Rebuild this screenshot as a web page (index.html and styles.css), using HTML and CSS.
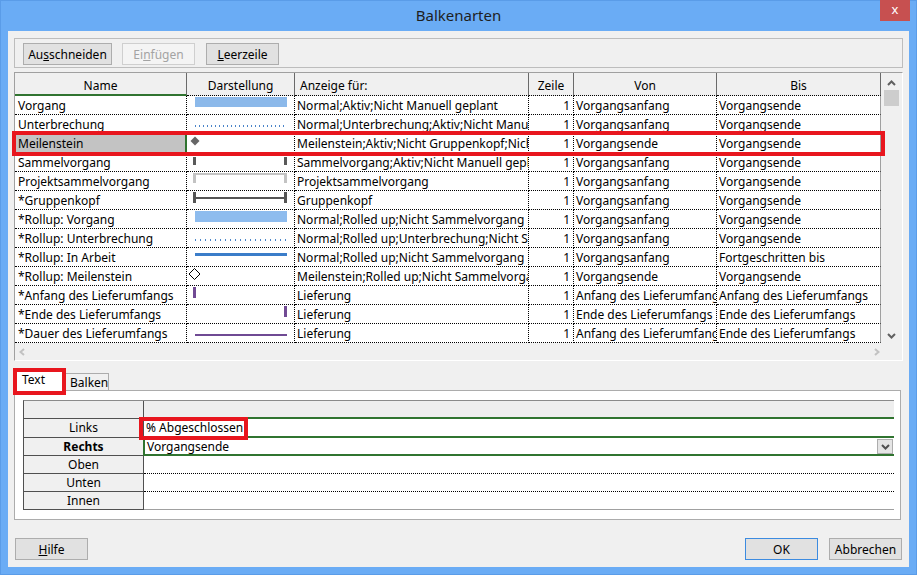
FILE: index.html
```html
<!DOCTYPE html>
<html lang="de">
<head>
<meta charset="utf-8">
<title>Balkenarten</title>
<link rel="stylesheet" href="styles.css">
</head>
<body>
<div class="window">
  <div class="titlebar">
    <div></div>
    <div class="title">Balkenarten</div>
    <div class="close">x</div>
  </div>
  <div class="client">
    <div class="toolbar">
      <button class="btn btn-cut">Au<u>s</u>schneiden</button>
      <button class="btn btn-paste" disabled>Ei<u>n</u>fügen</button>
      <button class="btn btn-blank"><u>L</u>eerzeile</button>
    </div>

    <div class="table">
      <div class="table-main">
        <div class="cols">
          <div class="row head">
            <div class="c c-name">Name</div>
            <div class="c c-dar">Darstellung</div>
            <div class="c c-anz">Anzeige für:</div>
            <div class="c c-zei">Zeile</div>
            <div class="c c-von">Von</div>
            <div class="c c-bis">Bis</div>
          </div>
          <div class="row">
            <div class="c c-name">Vorgang</div>
            <div class="c c-dar"><svg width="107" height="18"><rect x="8" y="1" width="92" height="10" fill="#8cb9ea"/></svg></div>
            <div class="c c-anz">Normal;Aktiv;Nicht Manuell geplant</div>
            <div class="c c-zei">1</div>
            <div class="c c-von">Vorgangsanfang</div>
            <div class="c c-bis">Vorgangsende</div>
          </div>
          <div class="row">
            <div class="c c-name">Unterbrechung</div>
            <div class="c c-dar"><svg width="107" height="18"><line x1="8" y1="11" x2="100" y2="11" stroke="#4a84c8" stroke-width="2" stroke-dasharray="1 3"/></svg></div>
            <div class="c c-anz">Normal;Unterbrechung;Aktiv;Nicht Manuell geplant</div>
            <div class="c c-zei">1</div>
            <div class="c c-von">Vorgangsanfang</div>
            <div class="c c-bis">Vorgangsende</div>
          </div>
          <div class="row sel">
            <div class="c c-name selcell">Meilenstein</div>
            <div class="c c-dar"><svg width="107" height="18"><polygon points="8,2.5 12.5,7 8,11.5 3.5,7" fill="#666666"/></svg></div>
            <div class="c c-anz">Meilenstein;Aktiv;Nicht Gruppenkopf;Nicht Manuell geplant</div>
            <div class="c c-zei">1</div>
            <div class="c c-von">Vorgangsende</div>
            <div class="c c-bis">Vorgangsende</div>
            <span class="mark mark-row"></span>
          </div>
          <div class="row">
            <div class="c c-name">Sammelvorgang</div>
            <div class="c c-dar"><svg width="107" height="18"><rect x="6" y="4" width="3" height="8" fill="#595959"/><rect x="97" y="4" width="3" height="8" fill="#595959"/></svg></div>
            <div class="c c-anz">Sammelvorgang;Aktiv;Nicht Manuell geplant</div>
            <div class="c c-zei">1</div>
            <div class="c c-von">Vorgangsanfang</div>
            <div class="c c-bis">Vorgangsende</div>
          </div>
          <div class="row">
            <div class="c c-name">Projektsammelvorgang</div>
            <div class="c c-dar"><svg width="107" height="18"><path d="M6 1H100V11H97V3H9V11H6Z" fill="#c3c3c3"/></svg></div>
            <div class="c c-anz">Projektsammelvorgang</div>
            <div class="c c-zei">1</div>
            <div class="c c-von">Vorgangsanfang</div>
            <div class="c c-bis">Vorgangsende</div>
          </div>
          <div class="row">
            <div class="c c-name">*Gruppenkopf</div>
            <div class="c c-dar"><svg width="107" height="18"><g fill="#555555"><rect x="6" y="1" width="3" height="11"/><rect x="97" y="1" width="3" height="11"/><rect x="6" y="6" width="94" height="2"/></g></svg></div>
            <div class="c c-anz">Gruppenkopf</div>
            <div class="c c-zei">1</div>
            <div class="c c-von">Vorgangsanfang</div>
            <div class="c c-bis">Vorgangsende</div>
          </div>
          <div class="row">
            <div class="c c-name">*Rollup: Vorgang</div>
            <div class="c c-dar"><svg width="107" height="18"><rect x="8" y="1" width="92" height="11" fill="#8ebcee"/></svg></div>
            <div class="c c-anz">Normal;Rolled up;Nicht Sammelvorgang</div>
            <div class="c c-zei">1</div>
            <div class="c c-von">Vorgangsanfang</div>
            <div class="c c-bis">Vorgangsende</div>
          </div>
          <div class="row">
            <div class="c c-name">*Rollup: Unterbrechung</div>
            <div class="c c-dar"><svg width="107" height="18"><line x1="8" y1="11" x2="100" y2="11" stroke="#4a86c9" stroke-width="2" stroke-dasharray="1 4"/></svg></div>
            <div class="c c-anz">Normal;Rolled up;Unterbrechung;Nicht Sammelvorgang</div>
            <div class="c c-zei">1</div>
            <div class="c c-von">Vorgangsanfang</div>
            <div class="c c-bis">Vorgangsende</div>
          </div>
          <div class="row">
            <div class="c c-name">*Rollup: In Arbeit</div>
            <div class="c c-dar"><svg width="107" height="18"><rect x="8" y="5" width="92" height="3" fill="#3b7dc9"/></svg></div>
            <div class="c c-anz">Normal;Rolled up;Nicht Sammelvorgang</div>
            <div class="c c-zei">1</div>
            <div class="c c-von">Vorgangsanfang</div>
            <div class="c c-bis">Fortgeschritten bis</div>
          </div>
          <div class="row">
            <div class="c c-name">*Rollup: Meilenstein</div>
            <div class="c c-dar"><svg width="107" height="18"><polygon points="7.5,1.5 13,7 7.5,12.5 2,7" fill="#ffffff" stroke="#000000" stroke-width="1"/></svg></div>
            <div class="c c-anz">Meilenstein;Rolled up;Nicht Sammelvorgang</div>
            <div class="c c-zei">1</div>
            <div class="c c-von">Vorgangsende</div>
            <div class="c c-bis">Vorgangsende</div>
          </div>
          <div class="row">
            <div class="c c-name">*Anfang des Lieferumfangs</div>
            <div class="c c-dar"><svg width="107" height="18"><rect x="6" y="1" width="3" height="11" fill="#714a94"/></svg></div>
            <div class="c c-anz">Lieferung</div>
            <div class="c c-zei">1</div>
            <div class="c c-von">Anfang des Lieferumfangs</div>
            <div class="c c-bis">Anfang des Lieferumfangs</div>
          </div>
          <div class="row">
            <div class="c c-name">*Ende des Lieferumfangs</div>
            <div class="c c-dar"><svg width="107" height="18"><rect x="97" y="1" width="3" height="11" fill="#714a94"/></svg></div>
            <div class="c c-anz">Lieferung</div>
            <div class="c c-zei">1</div>
            <div class="c c-von">Ende des Lieferumfangs</div>
            <div class="c c-bis">Ende des Lieferumfangs</div>
          </div>
          <div class="row">
            <div class="c c-name">*Dauer des Lieferumfangs</div>
            <div class="c c-dar"><svg width="107" height="18"><rect x="8" y="10" width="92" height="2" fill="#6f4a93"/></svg></div>
            <div class="c c-anz">Lieferung</div>
            <div class="c c-zei">1</div>
            <div class="c c-von">Anfang des Lieferumfangs</div>
            <div class="c c-bis">Ende des Lieferumfangs</div>
          </div>
        </div>
        <div class="vscroll">
          <svg class="arrow-up" width="9" height="6"><path d="M1 5L4.5 1.5L8 5" fill="none" stroke="#606060" stroke-width="2"/></svg>
          <div class="thumb"></div>
          <div class="track"></div>
          <svg class="arrow-down" width="9" height="6"><path d="M1 1L4.5 4.5L8 1" fill="none" stroke="#606060" stroke-width="2"/></svg>
        </div>
      </div>
      <div class="hscroll">
        <div class="hbar">
          <svg width="6" height="8"><path d="M5 1L1.5 4L5 7" fill="none" stroke="#c2c2c2" stroke-width="2"/></svg>
          <svg width="6" height="8"><path d="M1 1L4.5 4L1 7" fill="none" stroke="#c2c2c2" stroke-width="2"/></svg>
        </div>
        <div class="corner"></div>
      </div>
    </div>

    <div class="tabs">
      <div class="tab tab-active">Text<span class="mark mark-tab"></span></div>
      <div class="tab tab-other">Balken</div>
    </div>
    <div class="panel">
      <div class="grid">
        <div class="rh rh-head"></div>
        <div class="vc vc-head"></div>
        <div class="rh">Links</div>
        <div class="vc vc-links">% Abgeschlossen<span class="mark mark-cell"></span></div>
        <div class="rh rh-bold">Rechts</div>
        <div class="vc vc-rechts">
          <span>Vorgangsende</span>
          <span class="dd"><svg width="9" height="6"><path d="M1 1L4.5 4.5L8 1" fill="none" stroke="#505050" stroke-width="2"/></svg></span>
        </div>
        <div class="rh">Oben</div>
        <div class="vc vc-dot"></div>
        <div class="rh">Unten</div>
        <div class="vc vc-dot"></div>
        <div class="rh rh-last">Innen</div>
        <div class="vc vc-last"></div>
      </div>
    </div>

    <div class="footer">
      <button class="btn btn-foot"><u>H</u>ilfe</button>
      <div class="spacer"></div>
      <button class="btn btn-foot btn-default">OK</button>
      <button class="btn btn-foot btn-cancel">Abbrechen</button>
    </div>
  </div>
</div>
</body>
</html>
```

FILE: styles.css
```css
* { box-sizing: border-box; }
html, body { margin: 0; padding: 0; }
body {
  width: 917px;
  height: 575px;
  overflow: hidden;
  font-family: "Noto Sans", sans-serif;
  font-size: 12px;
  color: #000;
}

.window {
  width: 917px;
  height: 575px;
  background: #6aacf5;
  border: 1px solid #5a9ce8;
  display: flex;
  flex-direction: column;
}

.titlebar {
  height: 30px;
  display: grid;
  grid-template-columns: 1fr auto 1fr;
}
.title {
  font-size: 15px;
  line-height: 29px;
  color: #1e1e1e;
}
.close {
  justify-self: end;
  align-self: start;
  margin-top: -1px;
  margin-right: 6px;
  width: 30px;
  height: 21px;
  background: #c75050;
  color: #fff;
  font-size: 13px;
  line-height: 19px;
  text-align: center;
}

.client {
  flex: 1;
  margin: 0 7px 7px 7px;
  background: #f0f0f0;
  padding: 7px 6px 0 6px;
  display: flex;
  flex-direction: column;
}

/* toolbar */
.toolbar {
  height: 30px;
  border: 1px solid #bdbdbd;
  padding: 4px 0 0 8px;
  display: flex;
  align-items: flex-start;
}
.btn {
  height: 22px;
  padding: 0;
  margin: 0;
  border: 1px solid #adadad;
  background: #e1e1e1;
  font-family: "Noto Sans", sans-serif;
  font-size: 12px;
  line-height: 19px;
  color: #000;
  text-align: center;
}
.btn-cut { width: 89px; }
.btn-paste {
  width: 73px;
  margin-left: 10px;
  color: #a3a3a3;
  background: #f4f4f4;
  border-color: #cfcfcf;
}
.btn-blank { width: 73px; margin-left: 11px; }

/* table */
.table {
  margin-top: 4px;
  height: 289px;
  border: 1px solid;
  border-color: #a0a0a0 #ffffff #ffffff #a0a0a0;
  display: flex;
  flex-direction: column;
}
.table-main {
  height: 270px;
  display: flex;
}
.cols {
  width: 866px;
  background: #fff;
  display: flex;
  flex-direction: column;
}
.row {
  height: 19px;
  display: flex;
}
.row.head { height: 23px; }
.sel { position: relative; }

.c {
  height: 100%;
  border-right: 1px dotted #000;
  border-bottom: 1px dotted #000;
  overflow: hidden;
  white-space: nowrap;
  line-height: 17px;
  padding: 1px 2px 0 2px;
}
.c-name { width: 172px; padding-left: 3px; }
.c-dar { width: 108px; padding: 0; }
.c-dar svg { display: block; }
.c-anz { width: 234px; }
.c-zei { width: 45px; text-align: right; padding-right: 3px; }
.c-von { width: 143px; }
.c-bis { width: 164px; border-right: 1px solid #a0a0a0; }

.head .c {
  background: #f0f0f0;
  border-right: 1px solid #6a6a6a;
  text-align: center;
  line-height: 18px;
  padding: 4px 0 0 0;
}
.head .c-name { border-bottom: 2px solid #307430; }
.head .c-anz { text-align: left; padding-left: 5px; }

.selcell {
  background: #c3c3c3;
  border-right: 2px solid #307430;
}

.vscroll {
  width: 21px;
  background: #f0f0f0;
  display: flex;
  flex-direction: column;
  align-items: center;
  padding-top: 7px;
}
.arrow-up, .arrow-down { display: block; flex: none; }
.thumb {
  width: 15px;
  height: 16px;
  margin-top: 4px;
  background: #cdcdcd;
}
.track { flex: 1; }
.arrow-down { margin-bottom: 4px; }

.hscroll {
  height: 17px;
  background: #f0f0f0;
  display: flex;
}
.hbar {
  width: 866px;
  display: flex;
  align-items: center;
  justify-content: space-between;
  padding: 0 1px 0 4px;
}
.hbar svg { display: block; }
.corner { width: 21px; }

/* annotation marks */
.mark {
  position: absolute;
  border: 4px solid #e8161e;
  pointer-events: none;
}
.mark-row { left: -3px; top: -3px; right: -4px; bottom: -3px; }
.mark-tab { left: -2px; top: -1px; right: -2px; bottom: -4px; }
.mark-cell { left: -5px; top: -2px; width: 109px; height: 23px; }

/* tabs */
.tabs {
  margin-top: 7px;
  height: 23px;
  margin-bottom: -1px;
  display: flex;
  align-items: flex-end;
}
.tab {
  border: 1px solid #acacac;
  border-bottom: none;
  font-size: 12px;
  white-space: nowrap;
}
.tab-active {
  position: relative;
  width: 51px;
  height: 23px;
  background: #fff;
  padding: 2px 0 0 7px;
  line-height: 18px;
}
.tab-other {
  width: 44px;
  height: 18px;
  background: #f0f0f0;
  border-left: none;
  padding-left: 5px;
  line-height: 17px;
}

/* panel */
.panel {
  height: 130px;
  width: 887px;
  border: 1px solid #acacac;
  background: #fff;
  padding: 9px 0 0 8px;
}
.grid {
  width: 871px;
  border-left: 1px solid #505050;
  border-top: 1px solid #8a8a8a;
  display: grid;
  grid-template-columns: 120px 1fr;
  grid-template-rows: 18px 19px 18px 18px 18px 18px;
}
.rh {
  background: #f0f0f0;
  border-right: 1px solid #505050;
  border-bottom: 1px solid #505050;
  text-align: center;
  line-height: 17px;
}
.rh-head { background: #eeeeee; }
.rh-bold { font-weight: bold; }
.vc {
  padding-left: 2px;
  line-height: 17px;
  white-space: nowrap;
}
.vc-head {
  background: #eeeeee;
  border-bottom: 2px solid #307430;
}
.vc-links {
  position: relative;
  border-bottom: 2px solid #307430;
}
.vc-rechts {
  border-left: 2px solid #307430;
  margin-left: -1px;
  border-bottom: 2px solid #307430;
  display: flex;
  align-items: flex-start;
  padding-left: 2px;
  padding-right: 1px;
}
.vc-rechts .dd {
  margin-left: auto;
  margin-top: 1px;
  width: 16px;
  height: 15px;
  border: 1px solid #adadad;
  background: #e5e5e5;
  display: flex;
  align-items: center;
  justify-content: center;
}
.vc-rechts .dd svg { display: block; }
.vc-dot { border-bottom: 1px dotted #000; }
.vc-last { border-bottom: 1px solid #a0a0a0; }

/* footer */
.footer {
  margin-top: 18px;
  display: flex;
  padding: 0 1px;
}
.spacer { flex: 1; }
.btn-foot { width: 73px; }
.btn-default { border-color: #3c8be0; }
.btn-cancel { margin-left: 11px; }
```
